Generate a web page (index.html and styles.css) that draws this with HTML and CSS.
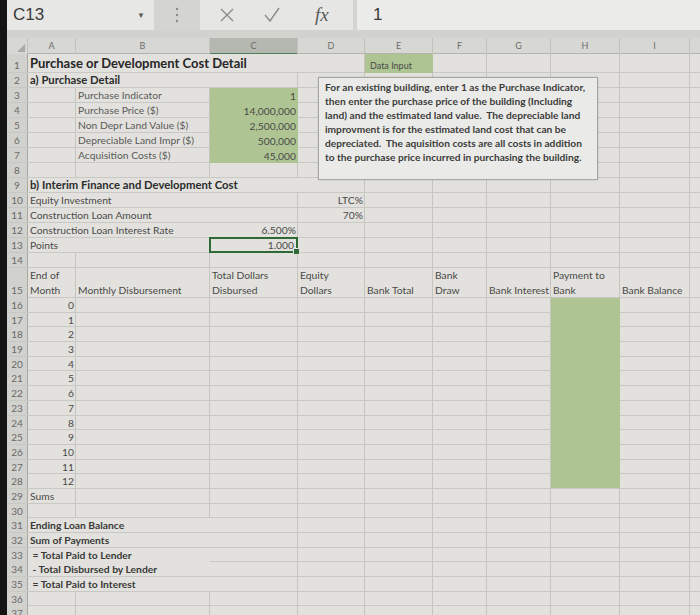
FILE: index.html
```html
<!DOCTYPE html>
<html>
<head>
<meta charset="utf-8">
<link rel="stylesheet" href="styles.css">
</head>
<body>
<div class="screen">
  <div class="fbar">
    <div class="namebox"><span>C13</span><span class="caret">&#9660;</span></div>
    <div class="dots"><svg width="4" height="16" viewBox="0 0 4 16"><circle cx="2" cy="2" r="1.2"/><circle cx="2" cy="8" r="1.2"/><circle cx="2" cy="14" r="1.2"/></svg></div>
    <div class="icons">
      <svg class="ico" width="16" height="16" viewBox="0 0 16 16"><path d="M2 2 L14 14 M14 2 L2 14"/></svg>
      <svg class="ico" width="18" height="16" viewBox="0 0 18 16"><path d="M2 8 L7 14 L16 1"/></svg>
      <span class="fx">fx</span>
    </div>
    <div class="formula">1</div>
  </div>

  <div class="sheet">
    <div class="row hdr">
      <div class="n corner"><svg width="8" height="8" viewBox="0 0 8 8"><polygon points="8,0 8,8 0,8"/></svg></div>
      <div class="a">A</div><div class="b">B</div><div class="c cur">C</div><div class="d">D</div><div class="e">E</div><div class="f">F</div><div class="g">G</div><div class="h">H</div><div class="i">I</div>
    </div>

    <div class="row r1"><div class="n">1</div><div class="a-c ov title">Purchase or Development Cost Detail</div><div class="e green small">Data Input</div></div>
    <div class="row"><div class="n">2</div><div class="a-b ov sub">a) Purchase Detail</div></div>
    <div class="row"><div class="n">3</div><div class="b lbl">Purchase Indicator</div><div class="c green num">1</div></div>
    <div class="row"><div class="n">4</div><div class="b lbl">Purchase Price ($)</div><div class="c green num">14,000,000</div></div>
    <div class="row"><div class="n">5</div><div class="b lbl">Non Depr Land Value ($)</div><div class="c green num">2,500,000</div></div>
    <div class="row"><div class="n">6</div><div class="b lbl">Depreciable Land Impr ($)</div><div class="c green num">500,000</div></div>
    <div class="row"><div class="n">7</div><div class="b lbl">Acquisition Costs ($)</div><div class="c green num">45,000</div></div>
    <div class="row"><div class="n">8</div></div>
    <div class="row"><div class="n">9</div><div class="a-c ov sub">b) Interim Finance and Development Cost</div></div>
    <div class="row"><div class="n">10</div><div class="a-b ov">Equity Investment</div><div class="d num">LTC%</div></div>
    <div class="row"><div class="n">11</div><div class="a-b ov">Construction Loan Amount</div><div class="d num">70%</div></div>
    <div class="row"><div class="n">12</div><div class="a-b ov">Construction Loan Interest Rate</div><div class="c num">6.500%</div></div>
    <div class="row"><div class="n">13</div><div class="a-b ov">Points</div><div class="c num sel">1.000</div></div>
    <div class="row"><div class="n">14</div></div>
    <div class="row r15">
      <div class="n">15</div>
      <div class="a">End of<br>Month</div>
      <div class="b">Monthly Disbursement</div>
      <div class="c">Total Dollars<br>Disbursed</div>
      <div class="d">Equity<br>Dollars</div>
      <div class="e">Bank Total</div>
      <div class="f">Bank<br>Draw</div>
      <div class="g">Bank Interest</div>
      <div class="h">Payment to<br>Bank</div>
      <div class="i">Bank Balance</div>
    </div>
    <div class="row rs"><div class="n">16</div><div class="a num">0</div><div class="h green"></div></div>
    <div class="row rs"><div class="n">17</div><div class="a num">1</div><div class="h green"></div></div>
    <div class="row rs"><div class="n">18</div><div class="a num">2</div><div class="h green"></div></div>
    <div class="row rs"><div class="n">19</div><div class="a num">3</div><div class="h green"></div></div>
    <div class="row rs"><div class="n">20</div><div class="a num">4</div><div class="h green"></div></div>
    <div class="row rs"><div class="n">21</div><div class="a num">5</div><div class="h green"></div></div>
    <div class="row rs"><div class="n">22</div><div class="a num">6</div><div class="h green"></div></div>
    <div class="row rs"><div class="n">23</div><div class="a num">7</div><div class="h green"></div></div>
    <div class="row rs"><div class="n">24</div><div class="a num">8</div><div class="h green"></div></div>
    <div class="row rs"><div class="n">25</div><div class="a num">9</div><div class="h green"></div></div>
    <div class="row rs"><div class="n">26</div><div class="a num">10</div><div class="h green"></div></div>
    <div class="row rs"><div class="n">27</div><div class="a num">11</div><div class="h green"></div></div>
    <div class="row rs"><div class="n">28</div><div class="a num">12</div><div class="h green last"></div></div>
    <div class="row rs"><div class="n">29</div><div class="a">Sums</div></div>
    <div class="row rs"><div class="n">30</div></div>
    <div class="row rs"><div class="n">31</div><div class="a-b ov strong">Ending Loan Balance</div></div>
    <div class="row rs"><div class="n">32</div><div class="a-b ov strong">Sum of Payments</div></div>
    <div class="row rs"><div class="n">33</div><div class="a-b ov strong">&nbsp;= Total Paid to Lender</div></div>
    <div class="row rs"><div class="n">34</div><div class="a-b ov strong">&nbsp;- Total Disbursed by Lender</div></div>
    <div class="row rs"><div class="n">35</div><div class="a-b ov strong">&nbsp;= Total Paid to Interest</div></div>
    <div class="row rs"><div class="n">36</div></div>
    <div class="row rs"><div class="n">37</div></div>

    <div class="note">For an existing building, enter 1 as the Purchase Indicator,<br>then enter the purchase price of the building (Including<br>land) and the estimated land value.&nbsp; The depreciable land<br>improvment is for the estimated land cost that can be<br>depreciated.&nbsp; The aquisition costs are all costs in addition<br>to the purchase price incurred in purchasing the building.</div>
  </div>
</div>
</body>
</html>
```

FILE: styles.css
```css
html, body {
  margin: 0;
  padding: 0;
  background: #141414;
  font-family: Lato, "Liberation Sans", sans-serif;
}

.screen {
  margin-left: 7px;
  width: 693px;
  height: 615px;
  overflow: hidden;
  background: #d2d2cf;
}

/* ---------- formula bar ---------- */
.fbar {
  display: flex;
  height: 30px;
  background: #d4d4d1;
}

.namebox {
  width: 147px;
  box-sizing: border-box;
  background: #e7e7e5;
  display: flex;
  align-items: center;
  justify-content: space-between;
  padding: 0 9px 0 6px;
  font-family: "Liberation Sans", sans-serif;
  font-size: 17px;
  color: #3a3a3a;
}

.caret {
  font-size: 8px;
  color: #5a5a5a;
}

.dots {
  width: 46px;
  display: flex;
  align-items: center;
  justify-content: center;
}

.dots svg { fill: #8a8a88; }

.icons {
  width: 153px;
  background: #e6e6e4;
  display: flex;
  align-items: center;
  padding-left: 19px;
  gap: 28px;
  box-sizing: border-box;
}

.ico {
  fill: none;
  stroke: #8c8c8a;
  stroke-width: 1.4;
}

.fx {
  font-family: "Liberation Serif", serif;
  font-style: italic;
  font-size: 19px;
  color: #5a5a5a;
  margin-left: 6px;
}

.formula {
  flex: 1;
  margin-left: 4px;
  background: #ebebe9;
  display: flex;
  align-items: center;
  padding-left: 16px;
  font-family: "Liberation Sans", sans-serif;
  font-size: 17px;
  color: #3a3a3a;
}

/* ---------- sheet ---------- */
.sheet {
  position: relative;
  margin-top: 8px;
  background-color: #e2e1dd;
  background-image:
    linear-gradient(#c4c4c1, #c4c4c1),
    linear-gradient(#c4c4c1, #c4c4c1),
    linear-gradient(#c4c4c1, #c4c4c1),
    linear-gradient(#c4c4c1, #c4c4c1),
    linear-gradient(#c4c4c1, #c4c4c1),
    linear-gradient(#c4c4c1, #c4c4c1),
    linear-gradient(#c4c4c1, #c4c4c1),
    linear-gradient(#c4c4c1, #c4c4c1),
    linear-gradient(#c4c4c1, #c4c4c1);
  background-size: 1px 100%;
  background-position: 68px 0, 202px 0, 290px 0, 357px 0, 425px 0, 479px 0, 543px 0, 612px 0, 682px 0;
  background-repeat: no-repeat;
}

.row {
  display: grid;
  grid-template-columns: 21px 48px 134px 88px 67px 68px 54px 64px 69px 70px 1fr;
  height: 15px;
  box-sizing: border-box;
  border-bottom: 1px solid #c8c8c5;
  font-size: 10.3px;
  color: #4a4a48;
}

.row > div {
  align-self: end;
  white-space: nowrap;
  padding: 0 2px;
  line-height: 14px;
}

.r1 { height: 19px; }
.r15 { height: 30px; }
.rs { height: 14.7px; }

.n {
  grid-column: 1;
  align-self: stretch !important;
  background: #d1d1ce;
  border-right: 1px solid #a8a8a5;
  text-align: center;
  color: #6a6a68;
  font-size: 10px;
  padding: 0 !important;
  display: flex;
  align-items: flex-end;
  justify-content: center;
}

.a { grid-column: 2; }
.b { grid-column: 3; }
.c { grid-column: 4; }
.d { grid-column: 5; }
.e { grid-column: 6; }
.f { grid-column: 7; }
.g { grid-column: 8; }
.h { grid-column: 9; }
.i { grid-column: 10; }
.a-b { grid-column: 2 / 4; }
.a-c { grid-column: 2 / 5; }

/* text overflowing into neighbour cells hides their grid lines */
.ov {
  align-self: stretch !important;
  display: flex;
  align-items: flex-end;
  background: #e2e1dd;
}

/* header row */
.hdr {
  height: 16px;
  background: #d7d7d4;
  border-bottom: 1px solid #b3b3b0;
}

.hdr > div {
  align-self: stretch;
  text-align: center;
  color: #6c6c6a;
  font-size: 9px;
  line-height: 15px;
  border-right: 1px solid #c2c2bf;
}

.hdr .n { background: #d7d7d4; justify-content: flex-end; align-items: flex-end; }
.corner svg { fill: #a9a9a6; margin: 0 2px 2px 0; }

.hdr .cur {
  background: #b5b7b1;
  border-bottom: 2px solid #4f7f52;
  margin-bottom: -1px;
}

/* cell styles */
.title {
  font-weight: bold;
  font-size: 13px;
  color: #262626;
  line-height: 17px !important;
}

.sub {
  font-weight: bold;
  font-size: 11.3px;
  color: #2c2c2c;
}

.lbl { color: #5a5a58; }

.strong { font-weight: bold; color: #3a3a38; }

.num { text-align: right; }

.small { font-size: 9px; padding-left: 5px !important; }

.green {
  background: #aec493;
  align-self: stretch !important;
  margin-bottom: -1px;
  display: flex;
  align-items: flex-end;
  justify-content: flex-end;
}

.green.small { justify-content: flex-start; }
.h.green.last { margin-bottom: 0; }

.sel {
  position: relative;
  align-self: stretch !important;
  border: 2px solid #2f6a36;
  margin: -1px 0 -1px -1px;
  line-height: 12px !important;
  display: flex;
  align-items: flex-end;
  justify-content: flex-end;
}

.sel::after {
  content: "";
  position: absolute;
  right: -4px;
  bottom: -4px;
  width: 5px;
  height: 5px;
  background: #2f6a36;
  border: 1px solid #e2e1dd;
}

.r15 > div { line-height: 15px; }

/* floating text box */
.note {
  position: absolute;
  left: 311px;
  top: 39px;
  width: 280px;
  height: 103px;
  box-sizing: border-box;
  background: #eaeae8;
  border: 1px solid #a6a6a3;
  box-shadow: 0 0 2px rgba(0,0,0,0.15);
  padding: 2px 6px;
  font-size: 10.2px;
  line-height: 14px;
  font-weight: bold;
  white-space: nowrap;
  color: #3c3c3a;
}
```
